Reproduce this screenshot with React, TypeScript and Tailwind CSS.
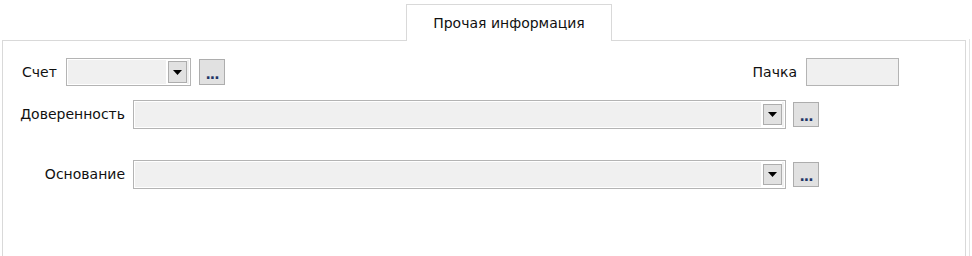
import React from "react";

const font = { fontFamily: '"DejaVu Sans", "Noto Sans", sans-serif' };

function DropBtn({ h }: { h: string }) {
  return (
    <div className={`flex w-[19px] ${h} items-center justify-center border border-[#adadad] bg-[#e1e1e1]`}>
      <svg width="9" height="5" viewBox="0 0 9 5">
        <path d="M0 0 H9 L4.5 5 Z" fill="#000" />
      </svg>
    </div>
  );
}

function Combo({ w, h, btnH }: { w: string; h: string; btnH: string }) {
  return (
    <div className={`flex ${w} ${h} items-center justify-end border border-[#b4b4b4] bg-[#f0f0f0] pr-[3px] shadow-[inset_0_0_0_1px_#ffffff]`}>
      <div className="flex h-full items-center bg-white pl-[2px]">
        <DropBtn h={btnH} />
      </div>
    </div>
  );
}

function Ellipsis({ h }: { h: string }) {
  return (
    <div className={`flex w-[26px] ${h} items-end justify-center border border-[#adadad] bg-[#e1e1e1] pb-[3px] text-[14px] font-bold leading-none tracking-[-1px] text-[#1f3566]`}>
      ...
    </div>
  );
}

export default function App() {
  return (
    <div className="relative h-[256px] w-[972px] overflow-hidden bg-white text-[14px] text-[#111]" style={font}>
      {/* tab strip */}
      <div className="flex h-[40px] items-end pl-[406px]">
        <div className="relative z-10 -mb-px flex h-[37px] w-[206px] items-center justify-center border border-b-0 border-[#d9d9d9] bg-white">
          Прочая информация
        </div>
      </div>

      {/* panel */}
      <div className="ml-[2px] h-[220px] w-[964px] border border-[#d9d9d9] border-b-0">
        <div className="mt-[17px] flex h-[28px] items-center pl-[19px]">
          <span className="w-[44px]">Счет</span>
          <Combo w="w-[125px]" h="h-[28px]" btnH="h-[22px]" />
          <div className="ml-[8px]">
            <Ellipsis h="h-[26px]" />
          </div>
          <div className="flex-1" />
          <span className="mr-[9px]">Пачка</span>
          <div className="mr-[66px] h-[28px] w-[93px] border border-[#b4b4b4] bg-[#f0f0f0]" />
        </div>

        <div className="mt-[14px] flex h-[29px] items-center">
          <span className="w-[122px] text-right">Доверенность</span>
          <div className="ml-[8px]">
            <Combo w="w-[653px]" h="h-[29px]" btnH="h-[21px]" />
          </div>
          <div className="ml-[7px]">
            <Ellipsis h="h-[25px]" />
          </div>
        </div>

        <div className="mt-[31px] flex h-[29px] items-center">
          <span className="w-[122px] text-right">Основание</span>
          <div className="ml-[8px]">
            <Combo w="w-[653px]" h="h-[29px]" btnH="h-[21px]" />
          </div>
          <div className="ml-[7px]">
            <Ellipsis h="h-[25px]" />
          </div>
        </div>
      </div>

      {/* outer window edge on the right */}
      <div className="absolute right-[2px] top-[39px] h-[217px] w-px bg-[#e3e3e3]" />
    </div>
  );
}
